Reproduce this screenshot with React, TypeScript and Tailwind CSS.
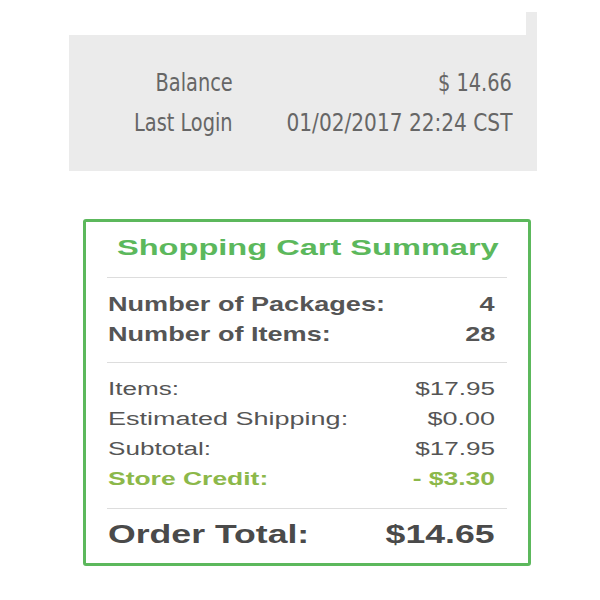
const sans = "font-['Liberation_Sans','Arial',sans-serif]";

type RowProps = {
  label: string;
  value: string;
  className?: string;
  scale: string;
};

const Row = ({ label, value, className, scale }: RowProps) => {
  return (
    <div className={`flex justify-between items-center ${className ?? ""}`}>
      <span className={`inline-block origin-left ${scale}`}>{label}</span>
      <span className={`inline-block origin-right ${scale}`}>{value}</span>
    </div>
  );
};

const AccountInfo = () => {
  return (
    <div className="flex flex-col">
      <div className="ml-[526px] w-[11px] h-[23px] bg-[#ebebeb]" />
      <div className="ml-[69px] w-[468px] h-[136px] bg-[#ebebeb] grid grid-cols-[164px_279px] content-center text-[25px] leading-[40px] text-[#666] font-['DejaVu_Sans_Condensed','DejaVu_Sans',sans-serif]">
        <span className="text-right"><span className="inline-block origin-right scale-x-[0.86]">Balance</span></span>
        <span className="text-right"><span className="inline-block origin-right scale-x-[0.86]">$ 14.66</span></span>
        <span className="text-right"><span className="inline-block origin-right scale-x-[0.86]">Last Login</span></span>
        <span className="text-right"><span className="inline-block origin-right scale-x-[0.895]">01/02/2017 22:24 CST</span></span>
      </div>
    </div>
  );
};

const CartSummary = () => {
  return (
    <div
      className={`ml-[83px] mt-[48px] w-[448px] h-[347px] border-[3px] border-[#5cb85c] rounded-[3px] bg-white px-[21px] pt-[13px] ${sans}`}
    >
      <h2 className="text-[22px] leading-[26px] font-bold text-[#5cb85c]">
        <span className="inline-block origin-left ml-[10px] scale-x-[1.48]">
          Shopping Cart Summary
        </span>
      </h2>
      <div className="mt-[16px] h-px bg-[#dddddd]" />
      <div className="pl-[1px] pr-[12px] py-[11px] text-[21px] leading-[30px] font-bold text-[#555]">
        <Row label="Number of Packages:" value="4" scale="scale-x-[1.29]" />
        <Row label="Number of Items:" value="28" scale="scale-x-[1.29]" />
      </div>
      <div className="mt-[2px] h-px bg-[#dddddd]" />
      <div className="pl-[1px] pr-[12px] pt-[11px] pb-[14px] text-[18px] leading-[30px] text-[#555]">
        <Row label="Items:" value="$17.95" scale="scale-x-[1.45]" />
        <Row label="Estimated Shipping:" value="$0.00" scale="scale-x-[1.5]" />
        <Row label="Subtotal:" value="$17.95" scale="scale-x-[1.45]" />
        <Row
          label="Store Credit:"
          value="- $3.30"
          className="font-bold text-[#8cb84a]"
          scale="scale-x-[1.47]"
        />
      </div>
      <div className="h-px bg-[#dddddd]" />
      <div className="pl-[1px] pr-[12px] pt-[7px] text-[26px] leading-[36px] font-bold text-[#4a4a4a]">
        <Row label="Order Total:" value="$14.65" scale="scale-x-[1.37]" />
      </div>
    </div>
  );
};

const App = () => {
  return (
    <div className="w-[600px] h-[600px] bg-white pt-[12px]">
      <AccountInfo />
      <CartSummary />
    </div>
  );
};

export default App;
